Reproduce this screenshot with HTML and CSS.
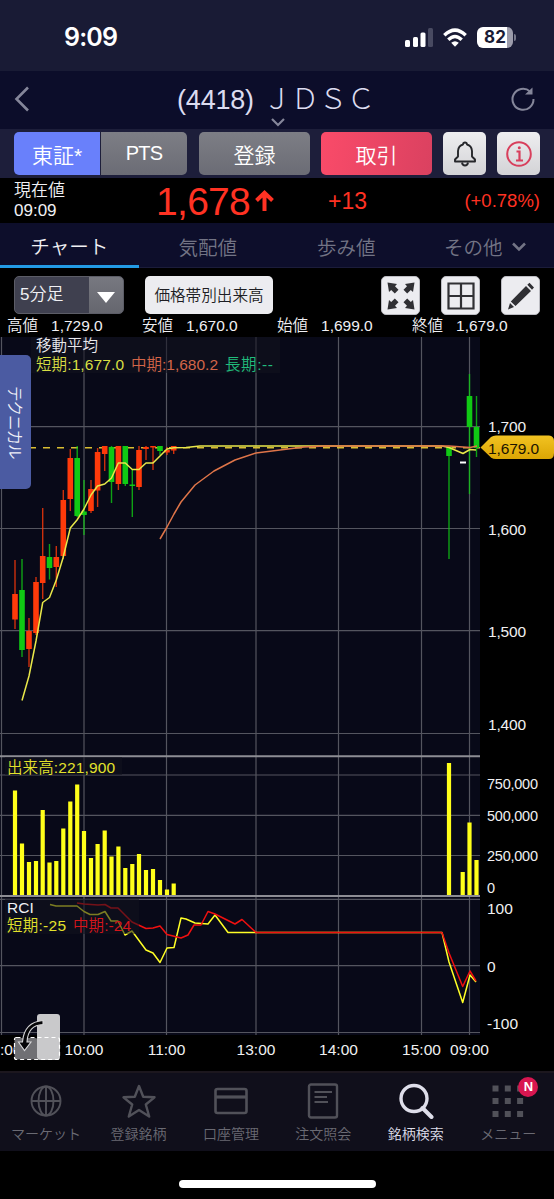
FILE: index.html
```
<!DOCTYPE html>
<html lang="ja">
<head>
    <meta charset="UTF-8">
    <meta name="viewport" content="width=device-width, initial-scale=1.0">
    <title>(4418) ＪＤＳＣ</title>
    <link rel="stylesheet" href="styles.css">
</head>
<body>
    <div class="status-bar">
        <span class="clock">9:09</span>
        <div class="status-icons">
            <svg width="28" height="19" viewBox="0 0 28 19">
                <rect x="0" y="12" width="5" height="7" rx="1.5" fill="#fff"/>
                <rect x="8" y="9" width="5" height="10" rx="1.5" fill="#fff"/>
                <rect x="15.500" y="4.500" width="5" height="14.500" rx="1.500" fill="#fff"/>
                <rect x="23" y="0" width="5" height="19" rx="1.5" fill="#484a61"/>
            </svg>
            <svg width="24" height="19" viewBox="0 0 24 19" fill="none" stroke="#fff" stroke-width="3.4">
                <path d="M1.300 7.200Q12 -3 22.700 7.200"/>
                <path d="M5.300 11.800Q12 5.300 18.700 11.800"/>
                <path d="M12 18.800L8.200 14.800Q12 11.500 15.800 14.800Z" fill="#fff" stroke="none"/>
            </svg>
            <div class="battery"><span>82</span></div>
        </div>
    </div>

    <header class="title-bar">
        <svg width="16" height="26" viewBox="0 0 16 26" fill="none" stroke="#85869a" stroke-width="2.600"><path d="M14 1.500L2.500 13L14 24.500"/></svg>
        <h1><span>(4418)</span>ＪＤＳＣ
            <svg class="title-arrow" width="14" height="9" viewBox="0 0 14 9" fill="none" stroke="#85869a" stroke-width="2.200"><path d="M1 1L7 7L13 1"/></svg>
        </h1>
        <svg width="26" height="26" viewBox="0 0 26 26"><path d="M20 5.500A10.500 10.500 0 1 0 23.500 13" fill="none" stroke="#85869a" stroke-width="2"/><path d="M22.500 1.500V8.500H15Z" fill="#85869a"/></svg>
    </header>

    <div class="action-bar">
        <div class="market-switch">
            <button class="btn btn-blue">東証*</button>
            <button class="btn btn-gray btn-pts">PTS</button>
        </div>
        <button class="btn btn-gray btn-regist">登録</button>
        <button class="btn btn-red">取引</button>
        <button class="btn btn-light">
            <svg width="24" height="26" viewBox="0 0 24 26" fill="none" stroke="#26272b" stroke-width="1.900" stroke-linejoin="round"><path d="M2 20.500V18.500L5 15.500V10Q5.500 4.500 10 3.500Q10.200 1.500 12 1.500Q13.800 1.500 14 3.500Q18.500 4.500 19 10V15.500L22 18.500V20.500Z"/><path d="M9 21.500Q9.500 24.500 12 24.500Q14.500 24.500 15 21.500"/></svg>
        </button>
        <button class="btn btn-light">
            <svg width="26" height="26" viewBox="0 0 26 26" fill="none" stroke="#d83f5c" stroke-width="2"><circle cx="13" cy="13" r="11.800"/><path d="M10.500 10.500H13.500V19M10 19.500H17" stroke-width="2.200"/><circle cx="13.300" cy="6.700" r="1.500" fill="#d83f5c" stroke="none"/></svg>
        </button>
    </div>

    <div class="price-bar">
        <div class="price-label">現在値<br>09:09</div>
        <div class="price-now">1,678<svg width="19" height="21" viewBox="0 0 19 21" fill="none" stroke="#ff3223" stroke-width="4"><path d="M9.500 21V3M1.500 10.500L9.500 2.800L17.500 10.500"/></svg></div>
        <div class="price-diff">+13</div>
        <div class="price-rate">(+0.78%)</div>
    </div>

    <nav class="tabs">
        <a class="active">チャート</a>
        <a>気配値</a>
        <a>歩み値</a>
        <a>その他<svg width="14" height="10" viewBox="0 0 14 10" fill="none" stroke="#737485" stroke-width="2.500"><path d="M1 1.500L7 7.500L13 1.500"/></svg></a>
    </nav>

    <div class="toolbar">
        <div class="select-box"><span>5分足</span><i></i></div>
        <button class="volume-btn">価格帯別出来高</button>
        <div class="tool-icons">
            <button class="tool">
                <svg width="28" height="28" viewBox="0 0 28 28" fill="#303034">
                    <path id="arrow" d="M0.500 0.500L10 2L8 4.200L11.500 7.800L7.800 11.500L4.200 8L2 10Z"/>
                    <use href="#arrow" transform="matrix(-1 0 0 1 28 0)"/>
                    <use href="#arrow" transform="matrix(1 0 0 -1 0 28)"/>
                    <use href="#arrow" transform="matrix(-1 0 0 -1 28 28)"/>
                </svg>
            </button>
            <button class="tool">
                <svg width="28" height="28" viewBox="0 0 28 28" fill="none" stroke="#303034" stroke-width="2.200"><path d="M1.500 1.500H26.500V26.500H1.500ZM14 1.500V26.500M1.500 14H26.500"/></svg>
            </button>
            <button class="tool">
                <svg width="28" height="28" viewBox="0 0 28 28" fill="#303034"><path d="M19 4L24 9L8.500 24L3.800 19.500ZM20.300 2.800L22.500 0.800L27 5.500L25 7.700ZM3 21L7 25L1 27.500Z"/></svg>
            </button>
        </div>
    </div>
    <div class="ohlc">
        <div><span>高値</span>1,729.0</div>
        <div><span>安値</span>1,670.0</div>
        <div><span>始値</span>1,699.0</div>
        <div><span>終値</span>1,679.0</div>
    </div>

    <div class="chart">
        <!-- y starts at 337 so chart values are page pixels -->
        <svg id="chart" width="554" height="734" viewBox="0 337 554 734">
            <rect x="0" y="337" width="480" height="698" fill="#080918"/>
            <g id="grid" stroke="#54555f" stroke-width="1.200"></g>
            <path d="M0 756.300H480M0 896H480" stroke="#8d8d94" stroke-width="2"/>
            <path d="M1 447.700H480" stroke="#d9bd32" stroke-width="1.500" stroke-dasharray="7 7"/>
            <g id="candles"></g>
            <g id="volume" fill="#ffff1a"></g>
            <g fill="none" stroke-width="1.500" stroke-linejoin="round">
                <polyline stroke="#e9e84a" points="22,700.500 29,676 36,641 42.700,602.500 49.500,597.500 56.300,580 63,558 70.300,528 77,520 84,509 91,495 97.500,486 104.700,484 111.500,478 118.300,463 125.300,463 132.300,469.500 139,469.500 146,463 153,463 160,456 167,449 174,447.700 186,447.500 200,446 442,446 449,447.500 463,453.500 470,449.500 476,450"/>
                <polyline stroke="#df7549" points="160,539 167,527 174,514 181,502 195,485 214,471 235,460 256,453 276,450.500 304,447 325,446 449,446 470,447.500 477,446"/>
                <polyline stroke="#ffff26" points="50,904.500 56,906 77,906 84,911.500 90,914.500 98,914.500 105,911.500 111,921 118,921 125,935 132,931 146,950 153,953 160,962.500 167,948 174,947.500 181,918 186,919 195,923 208,924 215,915 228,932.500 442,932.500 449,962 462.700,1002.500 470,975 476,982"/>
                <polyline stroke="#f01010" points="77,903 84,904 98,905 105,904.500 111,908 118,908 132,922 146,928.500 153,928 160,926 167,934.500 181,938 188,935 194,925 201,925 208,911.500 215,914 235,924 242,919.500 256,932.500 442,932.500 449,953 462.700,986.500 470,971 476,981"/>
            </g>
            <path d="M460 462.500H466" stroke="#fff" stroke-width="2"/>

            <g fill="#12131f" opacity="0.550">
                <rect x="31" y="337" width="249" height="36"/>
                <rect x="5" y="757" width="117" height="18"/>
                <rect x="5" y="899" width="134" height="35"/>
            </g>
            <g font-size="15.500">
                <text x="36" y="351" fill="#e8e8ec">移動平均</text>
                <text x="36" y="370" fill="#d8df43" textLength="88">短期:1,677.0</text>
                <text x="131" y="370" fill="#d26549" textLength="87">中期:1,680.2</text>
                <text x="225" y="370" fill="#21bd7d" textLength="48">長期:--</text>
                <text x="7" y="773" fill="#e3e22c" textLength="108">出来高:221,900</text>
                <text x="7" y="913" fill="#f0f0f4">RCI</text>
                <text x="7" y="931" fill="#e3e22c" textLength="59">短期:-25</text>
                <text x="73" y="931" fill="#d4151b" textLength="58">中期:-24</text>
            </g>
            <g fill="#f0f0f2" font-size="15.500">
                <text x="488" y="432" textLength="38">1,700</text>
                <text x="488" y="535" textLength="38">1,600</text>
                <text x="488" y="637" textLength="38">1,500</text>
                <text x="488" y="730" textLength="38">1,400</text>
                <text x="487" y="789" font-size="14.500" textLength="51">750,000</text>
                <text x="487" y="821" font-size="14.500" textLength="51">500,000</text>
                <text x="487" y="861" font-size="14.500" textLength="51">250,000</text>
                <text x="487" y="893" font-size="14.500">0</text>
                <text x="487" y="914">100</text>
                <text x="487" y="972">0</text>
                <text x="487" y="1029">-100</text>
            </g>
            <g fill="#f0f0f2" font-size="15.500" text-anchor="middle">
                <text x="0" y="1055" text-anchor="start">:00</text>
                <text x="84" y="1055">10:00</text>
                <text x="166.500" y="1055">11:00</text>
                <text x="256" y="1055">13:00</text>
                <text x="338.500" y="1055">14:00</text>
                <text x="421.500" y="1055">15:00</text>
                <text x="469.500" y="1055">09:00</text>
            </g>

            <!-- current price tag -->
            <defs>
                <linearGradient id="gold" x1="0" y1="0" x2="0" y2="1"><stop offset="0" stop-color="#f2c322"/><stop offset="1" stop-color="#dba504"/></linearGradient>
            </defs>
            <path d="M480.500 447.500L491 437Q493 435.500 496 435.500H549Q554 436 554 441V453Q554 459 549 459H496Q493 459 491 457.500Z" fill="url(#gold)"/>
            <text x="488" y="454" font-size="15.500" fill="#1c1400" textLength="51">1,679.0</text>

            <!-- rotate button -->
            <rect x="14.500" y="1038" width="23" height="21.500" rx="2" fill="#707074"/>
            <rect x="37" y="1014" width="23" height="46" rx="3" fill="#c9c9cb"/>
            <rect x="14.500" y="1037.500" width="45" height="22" rx="2" fill="none" stroke="#fff" stroke-width="1.200" stroke-dasharray="4 3"/>
            <path d="M43 1020.500Q24 1022 22.500 1042H18.500L24.500 1050.500L31 1042H27Q28 1025 43 1024.500Z" fill="#050507" stroke="#d8d8da" stroke-width="1.100"/>
        </svg>
        <button class="technical">テクニカル</button>
    </div>

    <nav class="bottom-nav">
        <a>
            <svg viewBox="0 0 36 36" stroke-width="1.900"><circle cx="18" cy="18" r="14.500"/><ellipse cx="18" cy="18" rx="7.500" ry="14.500"/><path d="M18 3V33M3.500 18H32.500"/></svg>
            マーケット
        </a>
        <a>
            <svg viewBox="0 0 36 36" stroke-width="2.400"><path d="M18 3L22.200 13.800L33.500 14.300L24.800 21.500L28.200 33.500L18 27L7.800 33.500L11.200 21.500L2.500 14.300L13.800 13.800Z" stroke-linejoin="round"/></svg>
            登録銘柄
        </a>
        <a>
            <svg viewBox="0 0 36 36" stroke-width="2.600"><rect x="2.500" y="6" width="31" height="24" rx="2"/><path d="M2.500 14H33.500" stroke-width="3.200"/></svg>
            口座管理
        </a>
        <a>
            <svg viewBox="0 0 36 36" stroke-width="2.400"><rect x="4" y="1.500" width="28" height="33" rx="2"/><path d="M9.500 9H27M9.500 14H22M9.500 19H23" stroke-width="1.800"/></svg>
            注文照会
        </a>
        <a class="active">
            <svg viewBox="0 0 36 36" stroke-width="3.400"><circle cx="16" cy="15.500" r="13"/><path d="M24.500 25L33.500 34" stroke-linecap="round" stroke-width="4"/></svg>
            銘柄検索
        </a>
        <a>
            <svg viewBox="0 0 36 36" stroke-width="6" stroke-dasharray="6 6.300"><path d="M2.500 5.500H34M2.500 18H34M2.500 31H34"/></svg>
            メニュー
            <span class="badge">N</span>
        </a>
    </nav>
    <div class="home-area"><div class="home-bar"></div></div>

    <script>
        // x, open/close top, open/close bottom, high, low, color
        const candles = [
            [15, 594, 619.5, 560, 629, 'r'],
            [22, 590, 650, 559, 657, 'g'],
            [29, 631, 649, 618, 667, 'r'],
            [36, 582, 633, 577, 635, 'r'],
            [42.7, 556, 583, 508, 599, 'r'],
            [49.5, 557, 568, 544, 579.5, 'g'],
            [56.3, 557, 567, 546, 587, 'r'],
            [63.3, 500, 556, 490, 559, 'r'],
            [70.3, 458, 499, 449, 511, 'r'],
            [77.2, 458, 516, 446, 517, 'g'],
            [84, 511.5, 515, 480, 535, 'g'],
            [91, 489, 511, 480, 513, 'r'],
            [97.6, 452, 490.5, 448, 507, 'r'],
            [104.7, 446, 454, 446, 471, 'r'],
            [111.5, 447, 482, 446, 503, 'g'],
            [118.4, 446, 484, 446, 490, 'r'],
            [125.3, 446, 484, 446, 486, 'g'],
            [132.3, 484.5, 486, 469, 517, 'g'],
            [139, 450, 487, 446, 490, 'r'],
            [146, 447, 449, 446, 460, 'r'],
            [153, 446, 447.5, 446, 470, 'r'],
            [160, 446, 451, 446, 455, 'g'],
            [167, 450, 452.5, 447, 455, 'r'],
            [173.7, 446, 450.5, 446, 454, 'r'],
            [449, 447, 456, 447, 559, 'g'],
            [469.5, 396, 427, 374, 494, 'g'],
            [476.5, 427, 448, 396, 457, 'g']
        ];

        // x, top of the bar
        const volumes = [
            [15, 790.5], [22, 843.5], [29, 862], [36, 861], [42.7, 810], [49.5, 862.5],
            [56.3, 861], [63.3, 828.5], [70.3, 801.5], [77.2, 784.5], [84, 831], [91, 858],
            [97.6, 844], [104.7, 830.5], [111.5, 856.5], [118.4, 846.5], [125.3, 868],
            [132.3, 864], [139, 854], [146, 870], [153, 869], [160, 880], [167, 889.5],
            [173.7, 883.5], [449, 763], [462.7, 872], [469.5, 822.5], [476.5, 860]
        ];
        const colors = { r: '#ff3a0a', g: '#10c914' };

        let grid = '';
        [1.5, 84, 166.5, 256, 338.5, 421.5, 469.5].forEach(x => {
            grid += `<path d="M${x} 337V1035"/>`;
        });
        [426.7, 528.5, 630.7, 733.5, 775, 815.3, 855.5, 899.3, 965.7, 1032.5].forEach(y => {
            grid += `<path d="M0 ${y}H480"/>`;
        });
        document.getElementById('grid').innerHTML = grid;

        document.getElementById('candles').innerHTML = candles.map(([x, top, bottom, high, low, c]) => `
            <g fill="${colors[c]}">
                <rect x="${x - 0.7}" y="${high}" width="1.4" height="${low - high}" opacity="0.8"/>
                <rect x="${x - 2.8}" y="${top}" width="5.6" height="${bottom - top}"/>
            </g>`).join('');

        document.getElementById('volume').innerHTML = volumes.map(([x, top]) =>
            `<rect x="${x - 2.1}" y="${top}" width="4.2" height="${895 - top}"/>`).join('');
    </script>
</body>
</html>
```
FILE: styles.css
```
* {
    box-sizing: border-box;
}

body {
    margin: 0;
    width: 554px;
    height: 1199px;
    overflow: hidden;
    background-color: #000;
    color: #f0f0f4;
    font-family: "Liberation Sans", "Noto Sans CJK JP", sans-serif;
    font-weight: 350;
}

button {
    border: none;
    padding: 0;
    font-family: inherit;
    font-weight: 350;
}

svg {
    display: block;
    flex-shrink: 0;
}

.status-bar {
    height: 71px;
    padding: 3px 41px 0 64px;
    display: flex;
    justify-content: space-between;
    align-items: center;
    background-color: #191b35;
}

.clock {
    font-family: Inter, sans-serif;
    font-size: 25px;
    font-weight: 600;
    letter-spacing: -0.8px;
    color: #fff;
}

.status-icons {
    display: flex;
    align-items: center;
    gap: 10px;
}

.battery {
    position: relative;
    width: 36px;
    height: 21px;
    border-radius: 6px;
    background: linear-gradient(90deg, #fff 82%, #9c9cab 82%);
    color: #191b35;
    font-family: Inter, sans-serif;
    font-size: 17px;
    font-weight: 700;
    line-height: 21px;
    text-align: center;
}

.battery::after {
    content: "";
    position: absolute;
    right: -3px;
    top: 7px;
    width: 2px;
    height: 7px;
    border-radius: 0 2px 2px 0;
    background-color: #77788a;
}

.title-bar {
    height: 58px;
    padding: 0 18px 0 14px;
    display: flex;
    justify-content: space-between;
    align-items: center;
    background-color: #0c0d2a;
}

.title-bar svg {
    margin-top: -3px;
}

.title-bar h1 {
    position: relative;
    margin: 0 0 0 12px;
    display: flex;
    align-items: center;
    font-size: 28px;
    font-weight: 300;
    line-height: 40px;
    color: #dcdcf0;
}

.title-bar h1 span {
    margin-right: 9px;
    font-size: 27px;
    letter-spacing: -0.2px;
}

.title-bar .title-arrow {
    position: absolute;
    left: 94px;
    top: 38px;
    margin: 0;
}

.action-bar {
    height: 49px;
    padding: 3px 14px 0;
    display: flex;
    background-color: #1d1e3a;
}

.btn {
    height: 43px;
    border-radius: 5px;
    color: #fff;
    font-size: 21px;
    display: flex;
    align-items: center;
    justify-content: center;
}

.market-switch {
    display: flex;
    gap: 1px;
    margin-right: 12px;
}

.market-switch .btn {
    width: 86px;
    border-radius: 5px 0 0 5px;
}

.market-switch .btn + .btn {
    border-radius: 0 5px 5px 0;
}

.btn-blue {
    background-color: #6980fb;
}

.btn-gray {
    background: linear-gradient(#7d7e85, #6b6c75);
}

.market-switch .btn-pts {
    font-size: 20px;
    letter-spacing: -0.8px;
}

.btn-regist {
    width: 111px;
    margin-right: 11px;
}

.btn-red {
    width: 111px;
    margin-right: 11px;
    background: linear-gradient(100deg, #fa4b69, #da4160);
}

.btn-light {
    width: 43px;
    background: linear-gradient(#eeeef0, #d3d3d6);
}

.btn-light + .btn-light {
    margin-left: 11px;
}

.price-bar {
    height: 45px;
    padding: 0 14px;
    display: flex;
    align-items: center;
    color: #ff3223;
}

.price-label {
    width: 142px;
    color: #f0f0f4;
    font-size: 17px;
    line-height: 20px;
}

.price-now {
    width: 172px;
    display: flex;
    align-items: center;
    gap: 5px;
    font-size: 39px;
    letter-spacing: -0.7px;
    padding-top: 3px;
}

.price-now svg {
    margin-top: -4px;
}

.price-diff {
    flex: 1;
    font-size: 23px;
    padding-top: 2px;
}

.price-rate {
    font-size: 18.5px;
}

.tabs {
    height: 45px;
    display: flex;
    background-color: #0d0e2b;
    border-bottom: 1px solid #1b1c3a;
}

.tabs a {
    width: 138.5px;
    height: 45px;
    padding-top: 2px;
    display: flex;
    align-items: center;
    justify-content: center;
    gap: 9px;
    color: #737485;
    font-size: 19.5px;
}

.tabs a.active {
    color: #f0f0f4;
    border-bottom: 3px solid #239be6;
}

.toolbar {
    height: 47px;
    padding: 8px 14px 0;
    display: flex;
}

.select-box {
    width: 110px;
    height: 38px;
    border: 1px solid #5c5d67;
    border-radius: 5px;
    display: flex;
    overflow: hidden;
    background-color: #3f404f;
    font-size: 17px;
    line-height: 36px;
}

.select-box span {
    flex: 1;
    padding-left: 5px;
}

.select-box i {
    width: 34px;
    background: linear-gradient(#777880, #65666e);
    display: flex;
    align-items: center;
    justify-content: center;
}

.select-box i::after {
    content: "";
    margin-top: 4px;
    border: 9px solid transparent;
    border-top: 11px solid #fff;
    border-bottom: none;
}

.volume-btn {
    width: 128px;
    height: 38px;
    margin-left: 21px;
    border-radius: 5px;
    background-color: #ececf0;
    color: #1e1e24;
    font-size: 15.6px;
    padding-bottom: 3px;
}

.tool-icons {
    margin-left: auto;
    display: flex;
    gap: 21px;
}

.tool {
    width: 39px;
    height: 39px;
    border: 1px solid #bcbcc2;
    border-radius: 5px;
    display: flex;
    align-items: center;
    justify-content: center;
    background-color: #ececf0;
}

.ohlc {
    height: 22px;
    padding-left: 7px;
    display: flex;
    font-size: 15.5px;
    line-height: 22px;
}

.ohlc div {
    width: 135px;
}

.ohlc span {
    margin-right: 13px;
}

.chart {
    position: relative;
    height: 734px;
}

.technical {
    position: absolute;
    left: 0;
    top: 18px;
    width: 31px;
    height: 134px;
    border-radius: 0 5px 5px 0;
    background-color: #4b5ba2;
    color: #f0f0f8;
    font-size: 15.5px;
    letter-spacing: -1px;
    writing-mode: vertical-rl;
    text-orientation: sideways;
}

.bottom-nav {
    height: 80px;
    border-top: 2px solid #1c171e;
    background-color: #100f1b;
    display: flex;
}

.bottom-nav a {
    position: relative;
    width: 92.6px;
    flex-shrink: 0;
    margin-left: -0.2px;
    padding-top: 10px;
    display: flex;
    flex-direction: column;
    align-items: center;
    gap: 4px;
    color: #6a6a73;
    font-size: 14px;
    line-height: 22px;
    white-space: nowrap;
}

.bottom-nav svg {
    width: 36px;
    height: 36px;
    fill: none;
    stroke: #515159;
}

.bottom-nav .active {
    color: #dedeea;
}

.bottom-nav .active svg {
    stroke: #dedeea;
}

.badge {
    position: absolute;
    top: 4px;
    right: 16px;
    width: 20px;
    height: 20px;
    border-radius: 50%;
    background-color: #d81650;
    color: #fff;
    font-size: 13px;
    font-weight: 700;
    line-height: 20px;
    text-align: center;
}

.home-area {
    height: 48px;
    padding-top: 29px;
}

.home-bar {
    width: 197px;
    height: 8px;
    margin: 0 auto;
    border-radius: 4px;
    background-color: #fff;
}
```
